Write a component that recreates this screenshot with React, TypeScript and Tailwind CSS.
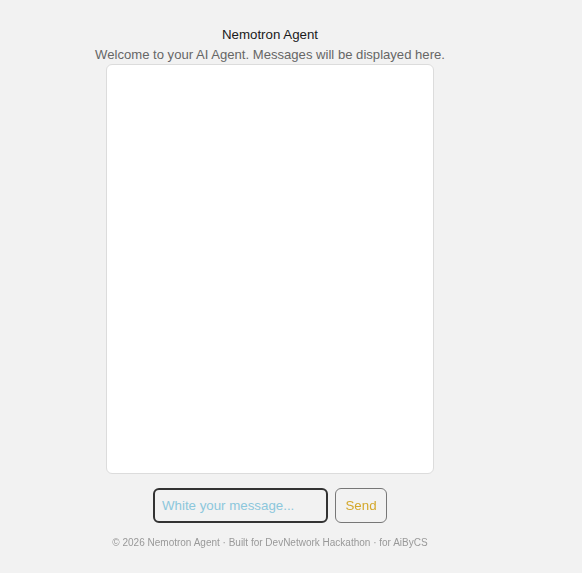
import { useState } from "react";

const App = () => {
  const [message, setMessage] = useState("");

  return (
    <div className="min-h-screen bg-[#f2f2f2] font-['Liberation_Sans',Arial,sans-serif]">
      <div className="w-[540px] flex flex-col items-center pt-[27px]">
        <h1 className="text-[13.3px] leading-[16px] text-[#1a1a1a]">Nemotron Agent</h1>
        <p className="mt-[3px] text-[13.1px] leading-[17px] text-[#666]">
          Welcome to your AI Agent. Messages will be displayed here.
        </p>
        <div className="mt-[1px] w-[328px] h-[410px] bg-white border border-[#dcdcdc] rounded-[6px]" />
        <div className="mt-[14px] flex items-center gap-[7px]">
          <input
            autoFocus
            value={message}
            onChange={(e) => setMessage(e.target.value)}
            placeholder="White your message..."
            className="w-[175px] h-[35px] px-[7px] border-2 border-[#333] rounded-[6px] bg-[#f2f2f2] text-[13.3px] text-[#333] placeholder:text-[#8cc7dc] caret-[#4aa3c4] outline-none"
          />
          <button className="w-[52px] h-[35px] border border-[#777] rounded-[6px] bg-[#f2f2f2] text-[13.3px] text-[#d4a82c]">
            Send
          </button>
        </div>
        <p className="mt-[13px] text-[10px] leading-[13px] text-[#999]">
          © 2026 Nemotron Agent · Built for DevNetwork Hackathon · for AiByCS
        </p>
      </div>
    </div>
  );
};

export default App;
